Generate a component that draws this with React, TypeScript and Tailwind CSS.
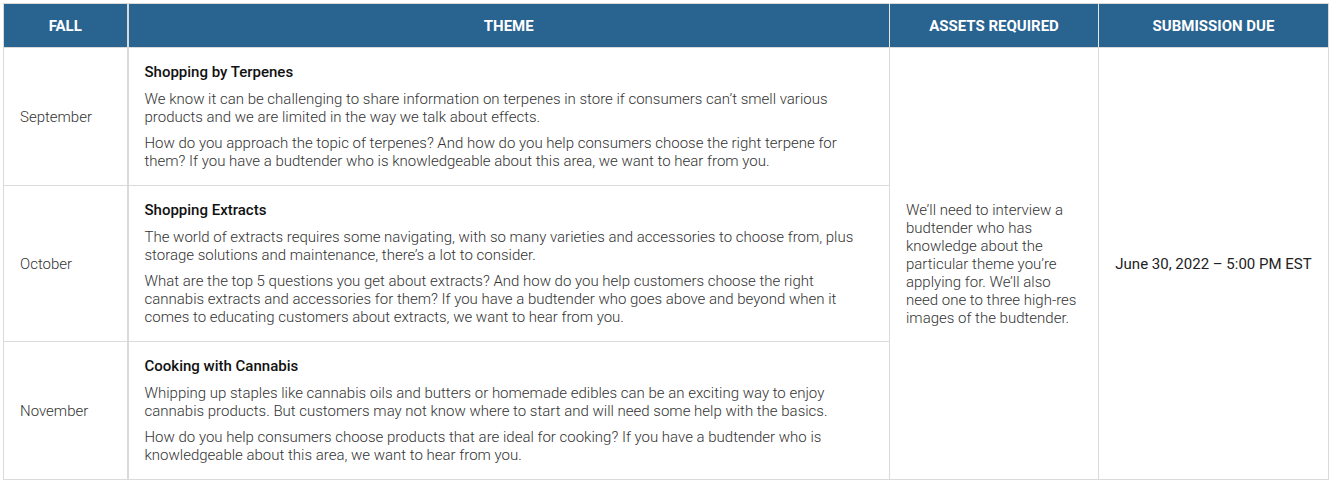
export default function App() {
  const rows = [
    {
      month: "September",
      title: "Shopping by Terpenes",
      paras: [
        "We know it can be challenging to share information on terpenes in store if consumers can’t smell various products and we are limited in the way we talk about effects.",
        "How do you approach the topic of terpenes? And how do you help consumers choose the right terpene for them? If you have a budtender who is knowledgeable about this area, we want to hear from you.",
      ],
    },
    {
      month: "October",
      title: "Shopping Extracts",
      paras: [
        "The world of extracts requires some navigating, with so many varieties and accessories to choose from, plus storage solutions and maintenance, there’s a lot to consider.",
        "What are the top 5 questions you get about extracts? And how do you help customers choose the right cannabis extracts and accessories for them? If you have a budtender who goes above and beyond when it comes to educating customers about extracts, we want to hear from you.",
      ],
    },
    {
      month: "November",
      title: "Cooking with Cannabis",
      paras: [
        "Whipping up staples like cannabis oils and butters or homemade edibles can be an exciting way to enjoy cannabis products. But customers may not know where to start and will need some help with the basics.",
        "How do you help consumers choose products that are ideal for cooking? If you have a budtender who is knowledgeable about this area, we want to hear from you.",
      ],
    },
  ];

  const headers = ["FALL", "THEME", "ASSETS REQUIRED", "SUBMISSION DUE"];

  return (
    <div className="bg-white pt-[3px] pl-[3px] font-['Roboto',sans-serif] text-[15px] font-light leading-[18px] text-[#333]">
      <table className="w-[1325px] table-fixed border-collapse border border-[#dadada]">
        <colgroup>
          <col className="w-[124px]" />
          <col className="w-[762px]" />
          <col className="w-[209px]" />
          <col className="w-[230px]" />
        </colgroup>
        <thead>
          <tr className="h-[44px] bg-[#29638f]">
            {headers.map((h, idx) => (
              <th
                key={h}
                className={
                  "border-b border-[#dadada] text-center font-bold text-white " +
                  (idx > 0 ? "border-l border-l-[#e6e6e6] " : "") +
                  (idx === 0 ? "border-r-2 border-r-[#dadada]" : "")
                }
              >
                {h}
              </th>
            ))}
          </tr>
        </thead>
        <tbody>
          {rows.map((row, idx) => (
            <tr key={row.month}>
              <td className="border border-r-2 border-[#dadada] px-4 align-middle">
                {row.month}
              </td>
              <td className="border border-[#dadada] px-4 py-[15px] align-top">
                <h4 className="mb-[9px] font-medium text-[#111]">{row.title}</h4>
                {row.paras.map((p, i) => (
                  <p key={i} className={i > 0 ? "mt-2" : ""}>
                    {p}
                  </p>
                ))}
              </td>
              {idx === 0 && (
                <>
                  <td rowSpan={3} className="border border-[#dadada] px-4 align-middle">
                    We’ll need to interview a budtender who has knowledge about the particular theme you’re
                    applying for. We’ll also need one to three high-res images of the budtender.
                  </td>
                  <td rowSpan={3} className="border border-[#dadada] px-4 align-middle text-center font-normal text-[#222]">
                    June 30, 2022 – 5:00 PM EST
                  </td>
                </>
              )}
            </tr>
          ))}
        </tbody>
      </table>
    </div>
  );
}
